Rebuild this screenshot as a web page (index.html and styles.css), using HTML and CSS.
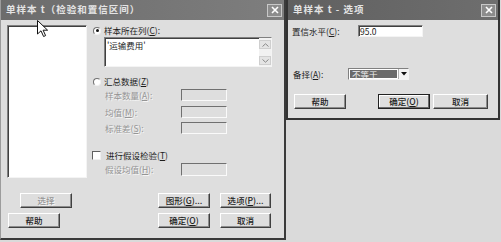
FILE: index.html
```html
<!DOCTYPE html>
<html lang="zh-CN">

<head>
    <meta charset="UTF-8">
    <title>单样本 t</title>
    <link rel="stylesheet" href="styles.css">
</head>

<body>
    <!-- 主对话框 -->
    <div class="dialog main">
        <div class="title">
            <span>单样本 t（检验和置信区间）</span>
            <span class="close">
                <svg width="8" height="8" viewBox="0 0 8 8"><path d="M1 1L7 7M7 1L1 7" stroke="#fff" stroke-width="1.6"/></svg>
            </span>
        </div>
        <div class="body">
            <div class="top">
                <div class="listbox"></div>
                <div class="form">
                    <div class="row">
                        <span class="radio on"></span>
                        <span>样本所在列(<u>C</u>):</span>
                    </div>
                    <div class="textarea">
                        <span class="txt">'运输费用'</span>
                        <div class="scroll">
                            <span class="arr">
                                <svg width="7" height="4" viewBox="0 0 7 4"><path d="M0.5 3.5L3.5 0.8L6.5 3.5" fill="none" stroke="#888"/></svg>
                            </span>
                            <span class="arr">
                                <svg width="7" height="4" viewBox="0 0 7 4"><path d="M0.5 0.5L3.5 3.2L6.5 0.5" fill="none" stroke="#888"/></svg>
                            </span>
                        </div>
                    </div>
                    <div class="row r2">
                        <span class="radio"></span>
                        <span>汇总数据(<u>Z</u>)</span>
                    </div>
                    <div class="field f1">
                        <span class="lbl off">样本数量(<u>A</u>):</span>
                        <span class="input"></span>
                    </div>
                    <div class="field f2">
                        <span class="lbl off">均值(<u>M</u>):</span>
                        <span class="input"></span>
                    </div>
                    <div class="field f3">
                        <span class="lbl off">标准差(<u>S</u>):</span>
                        <span class="input"></span>
                    </div>
                    <div class="row r3">
                        <span class="check"></span>
                        <span>进行假设检验(<u>T</u>)</span>
                    </div>
                    <div class="field f4">
                        <span class="lbl off">假设均值(<u>H</u>):</span>
                        <span class="input"></span>
                    </div>
                </div>
            </div>
            <div class="btns b1">
                <span class="btn off sel">选择</span>
                <span class="btn gfx">图形(<u>G</u>)...</span>
                <span class="btn opt">选项(<u>P</u>)...</span>
            </div>
            <div class="btns b2">
                <span class="btn help">帮助</span>
                <span class="btn ok">确定(<u>O</u>)</span>
                <span class="btn opt">取消</span>
            </div>
        </div>
    </div>

    <!-- 选项对话框 -->
    <div class="dialog options">
        <div class="title dark">
            <span>单样本 t - 选项</span>
            <span class="close">
                <svg width="8" height="8" viewBox="0 0 8 8"><path d="M1 1L7 7M7 1L1 7" stroke="#fff" stroke-width="1.6"/></svg>
            </span>
        </div>
        <div class="obody">
            <div class="orow">
                <span class="olbl">置信水平(<u>C</u>):</span>
                <span class="input level">95.0</span>
            </div>
            <div class="orow alt">
                <span class="olbl short">备择(<u>A</u>):</span>
                <span class="select">
                    <span class="val">不等于</span>
                    <span class="drop">
                        <svg width="6" height="4" viewBox="0 0 6 4"><path d="M0 0H6L3 3.5Z" fill="#111"/></svg>
                    </span>
                </span>
            </div>
            <div class="btns ob">
                <span class="btn">帮助</span>
                <span class="btn def">确定(<u>O</u>)</span>
                <span class="btn last">取消</span>
            </div>
        </div>
    </div>

    <!-- 鼠标指针 -->
    <svg class="cursor" width="12" height="18" viewBox="0 0 12 18">
        <path d="M0.5 0.5V14L4 10.8L6.6 16.5L8.6 15.6L6.1 10.2H10.6Z" fill="#fff" stroke="#111" stroke-width="1"/>
    </svg>
</body>

</html>
```

FILE: styles.css
```css
* {
    margin: 0;
    padding: 0;
    box-sizing: border-box;
}

body {
    position: relative;
    width: 501px;
    height: 242px;
    overflow: hidden;
    display: flex;
    align-items: flex-start;
    background-color: #dadada;
    font-family: "Noto Sans CJK SC", "DejaVu Sans", sans-serif;
    font-size: 8.5px;
    line-height: 1;
    color: #1c1c1c;
}

u {
    text-decoration: underline;
}

.dialog {
    display: flex;
    flex-direction: column;
    background-color: #dedede;
}

.main {
    width: 286px;
    height: 240px;
    border-left: 1px solid #9c9c9c;
    border-right: 2px solid #3a3a3a;
    border-bottom: 2px solid #3a3a3a;
}

.options {
    width: 214px;
    height: 120px;
    border: 2px solid #333333;
    border-top: 0;
}

.title {
    height: 20px;
    display: flex;
    align-items: center;
    justify-content: space-between;
    padding: 0 2px 0 5px;
    background: linear-gradient(to right, #6c6c6c, #7e7e7e);
    color: #e4e4e4;
    font-size: 9.5px;
    font-weight: bold;
    letter-spacing: 1px;
}

.title.dark {
    padding-left: 5px;
    background: linear-gradient(to right, #606060, #6e6e6e);
}

.close {
    width: 15px;
    height: 13px;
    display: flex;
    align-items: center;
    justify-content: center;
    border: 1px solid #c8c8c8;
    background-color: #8c8c8c;
}

/* 主对话框内容 */
.body {
    display: flex;
    flex-direction: column;
    padding: 5px 0 0 6px;
}

.top {
    display: flex;
}

.listbox {
    width: 80px;
    height: 153px;
    background-color: #ffffff;
    border: 1px solid;
    border-color: #808080 #f4f4f4 #f4f4f4 #808080;
    box-shadow: inset 1px 1px #404040;
}

.form {
    display: flex;
    flex-direction: column;
    margin-left: 5px;
}

.row {
    height: 11px;
    display: flex;
    align-items: center;
    gap: 3px;
}

.r2 {
    margin-top: 9px;
}

.r3 {
    margin-top: 16px;
}

.radio {
    width: 8px;
    height: 8px;
    margin-left: 1px;
    border-radius: 50%;
    background-color: #ffffff;
    border: 1px solid;
    border-color: #707070 #f0f0f0 #f0f0f0 #707070;
    display: flex;
    align-items: center;
    justify-content: center;
}

.radio.on::after {
    content: "";
    width: 3px;
    height: 3px;
    border-radius: 50%;
    background-color: #111111;
}

.check {
    width: 9px;
    height: 9px;
    background-color: #ffffff;
    border: 1px solid;
    border-color: #606060 #f0f0f0 #f0f0f0 #606060;
    margin-right: 2px;
}

.textarea {
    width: 168px;
    height: 30px;
    margin: 1px 0 0 12px;
    display: flex;
    justify-content: space-between;
    background-color: #ffffff;
    border: 1px solid;
    border-color: #808080 #f4f4f4 #f4f4f4 #808080;
    box-shadow: inset 1px 1px #404040;
}

.txt {
    padding: 3px 0 0 2px;
}

.scroll {
    width: 12px;
    display: flex;
    flex-direction: column;
    justify-content: space-between;
    padding: 2px 0 1px;
    background-color: #f2f2f2;
}

.arr {
    height: 9px;
    display: flex;
    align-items: center;
    justify-content: center;
    background-color: #e4e4e4;
    border: 1px solid #cfcfcf;
}

.field {
    display: flex;
    align-items: center;
    padding-left: 13px;
}

.f1 {
    margin-top: 2px;
}

.f2 {
    margin-top: 5px;
}

.f3 {
    margin-top: 4px;
}

.f4 {
    margin-top: 2px;
}

.lbl {
    width: 76px;
}

.off {
    color: #959595;
    text-shadow: 1px 1px #f6f6f6;
}

.input {
    width: 46px;
    height: 12px;
    background-color: #dedede;
    border: 1px solid;
    border-color: #707070 #fafafa #fafafa #707070;
}

.f4 .input {
    height: 13px;
}

/* 按钮 */
.btns {
    display: flex;
}

.b1 {
    margin-top: 15px;
}

.b2 {
    margin-top: 5px;
}

.btn {
    width: 52px;
    height: 15px;
    display: flex;
    align-items: center;
    justify-content: center;
    background-color: #dedede;
    border: 1px solid;
    border-color: #ffffff #404040 #404040 #ffffff;
    box-shadow: inset -1px -1px #8c8c8c;
    font-weight: 500;
}

.sel {
    margin-left: 13px;
}

.b1 .gfx {
    margin-left: 86px;
}

.help {
    margin-left: 1px;
}

.b2 .ok {
    margin-left: 98px;
}

.opt {
    margin-left: 10px;
    width: 51px;
}

/* 选项对话框内容 */
.obody {
    display: flex;
    flex-direction: column;
    padding: 5px 0 0 4px;
}

.orow {
    height: 12px;
    display: flex;
    align-items: center;
}

.olbl {
    width: 66px;
}

.olbl.short {
    width: 55px;
    margin-left: 1px;
}

.alt {
    margin-top: 31px;
}

.level {
    width: 65px;
    padding-left: 1px;
    background-color: #ffffff;
    border-color: #808080 #f4f4f4 #f4f4f4 #808080;
    box-shadow: inset 1px 1px #404040;
    color: #222222;
    display: flex;
    align-items: center;
}

.select {
    width: 61px;
    height: 12px;
    display: flex;
    border: 1px solid;
    border-color: #808080 #f4f4f4 #f4f4f4 #808080;
    background-color: #ffffff;
}

.val {
    flex: 1;
    display: flex;
    align-items: center;
    padding-left: 2px;
    margin: 1px;
    background-color: #6a6a6a;
    color: #f0f0f0;
}

.drop {
    width: 10px;
    display: flex;
    align-items: center;
    justify-content: center;
    background-color: #f4f4f4;
    border-left: 1px solid #b0b0b0;
}

.ob {
    margin-top: 14px;
    padding-left: 2px;
}

.ob .def {
    margin-left: 32px;
    border: 1px solid #222222;
    box-shadow: inset -1px -1px #6a6a6a, inset 1px 1px #ffffff;
}

.ob .last {
    margin-left: 3px;
    width: 55px;
}

.cursor {
    position: absolute;
    top: 20px;
    left: 37px;
}
```
